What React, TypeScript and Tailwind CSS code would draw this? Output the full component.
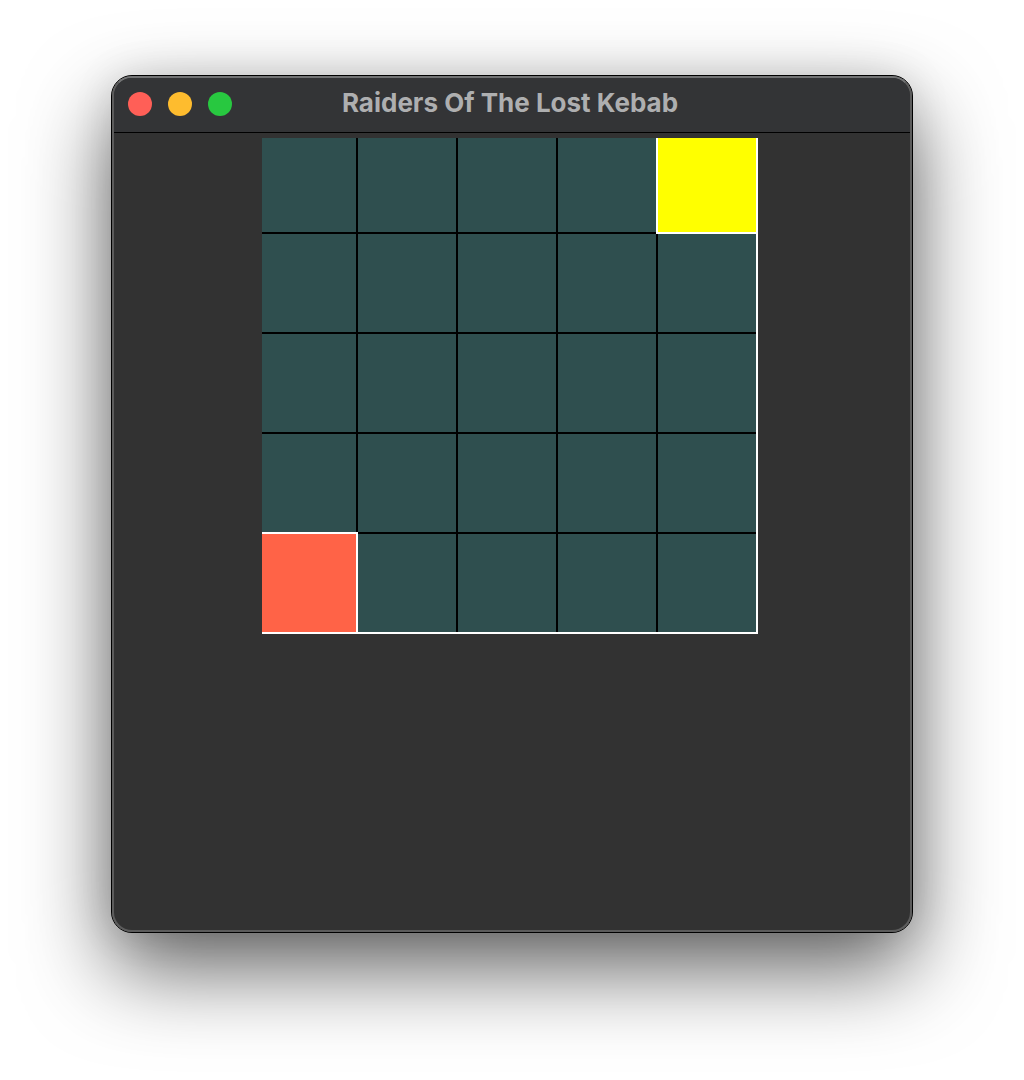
const BOARD_SIZE = 5;

type CellKind = "floor" | "player" | "kebab";

const CELL_STYLES: Record<CellKind, string> = {
  floor: "bg-[#2f4f4f]",
  player: "z-10 bg-[#ff6347] outline-2 outline-white",
  kebab: "z-10 bg-[#ffff00] outline-2 outline-white",
};

function cellKind(row: number, col: number): CellKind {
  if (row === 0 && col === BOARD_SIZE - 1) return "kebab";
  if (row === BOARD_SIZE - 1 && col === 0) return "player";
  return "floor";
}

function TitleBar({ title }: { title: string }) {
  return (
    <header className="grid h-[55px] shrink-0 grid-cols-[120px_1fr_124px] items-center border-b border-black bg-[#333436] pb-0.5">
      <div className="flex gap-4 pl-3.5">
        <button type="button" aria-label="Close" className="size-6 rounded-full bg-[#ff5f57]" />
        <button type="button" aria-label="Minimize" className="size-6 rounded-full bg-[#febc2e]" />
        <button type="button" aria-label="Zoom" className="size-6 rounded-full bg-[#28c840]" />
      </div>
      <h1 className="pb-0.5 text-center text-[26px] leading-8 font-bold whitespace-nowrap text-[#aeafb0]">{title}</h1>
    </header>
  );
}

function Board() {
  return (
    <div className="grid grid-cols-[94px_repeat(4,98px)] grid-rows-[94px_repeat(4,98px)] gap-0.5 overflow-hidden border-r-2 border-b-2 border-white bg-black">
      {Array.from({ length: BOARD_SIZE * BOARD_SIZE }, (_, i) => (
        <div key={i} className={CELL_STYLES[cellKind(Math.floor(i / BOARD_SIZE), i % BOARD_SIZE)]} />
      ))}
    </div>
  );
}

export default function App() {
  return (
    <div className="flex min-h-screen flex-col overflow-hidden bg-white px-[111px] pt-[75px] pb-[147px] font-[Inter,sans-serif]">
      <main className="flex flex-1 flex-col rounded-[21px] border border-black bg-[#5c5c5c] shadow-[0_36px_86px_rgba(0,0,0,0.62),0_0_40px_rgba(0,0,0,0.1)]">
        <div className="flex flex-1 flex-col overflow-hidden rounded-[20px] border-2 border-[#5c5c5c] border-t-[#727374] bg-[#323232]">
          <TitleBar title="Raiders Of The Lost Kebab" />
          <div className="flex justify-center pt-[5px] pr-1">
            <Board />
          </div>
        </div>
      </main>
    </div>
  );
}
